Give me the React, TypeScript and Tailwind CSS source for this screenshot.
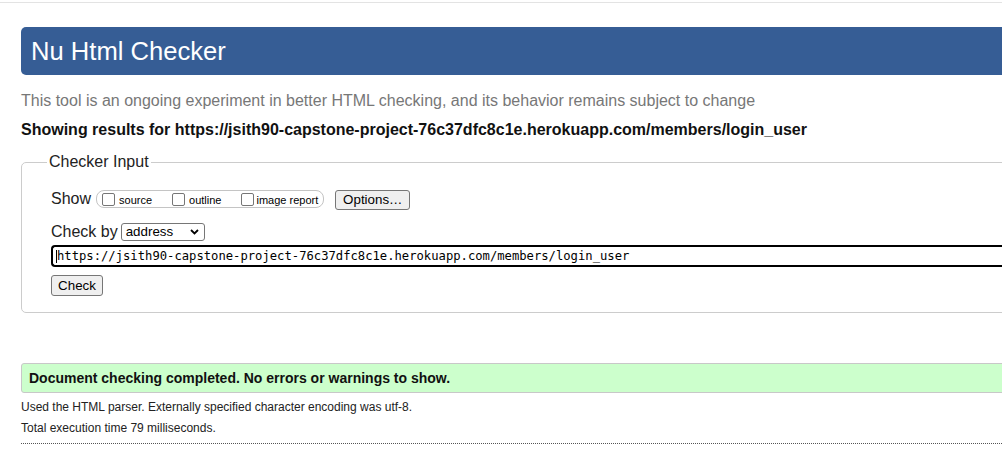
import React from "react";

function Box({ label, gap }: { label: string; gap: string }) {
  return (
    <span className="flex items-center">
      <span className="w-[13px] h-[13px] border border-[#767676] rounded-[2px] bg-white shrink-0" />
      <span className={`${gap} text-[11px] leading-[13px] pt-[3px] text-black`}>{label}</span>
    </span>
  );
}

export default function App() {
  return (
    <div
      className="w-[1002px] h-[472px] overflow-hidden bg-white text-black"
      style={{ fontFamily: '"Liberation Sans", Arial, sans-serif' }}
    >
      <div className="h-[2px]" />
      <div className="h-px bg-[#e3e3e3]" />
      <div className="w-[1300px] pl-[21px]">
        <div className="mt-[24px] h-[48px] bg-[#365d95] rounded-[5px] flex items-center pl-[10px]">
          <span className="text-white text-[25.6px] leading-[30px]">Nu Html Checker</span>
        </div>
        <p className="mt-[17px] text-[16px] leading-[18px] text-[#777]">
          This tool is an ongoing experiment in better HTML checking, and its behavior remains subject to change
        </p>
        <p className="mt-[11px] text-[16px] leading-[18px] font-bold text-[#111]">
          Showing results for https://jsith90-capstone-project-76c37dfc8c1e.herokuapp.com/members/login_user
        </p>

        <fieldset className="mt-[14px] border border-[#cccccc] rounded-[5px] pl-[29px] pt-[19px] pb-[16px]">
          <legend className="-ml-[4px] px-[2px] text-[16px] leading-[18px] text-[#222]">Checker Input</legend>

          <div className="flex items-start">
            <span className="text-[16px] leading-[18px] text-[#222]">Show</span>
            <span className="ml-[5px] h-[18px] flex items-center border border-[#c4c4c4] rounded-[8px] pl-[5px] pr-[5px]">
              <Box label="source" gap="ml-[4px]" />
              <span className="ml-[20px]"><Box label="outline" gap="ml-[4px]" /></span>
              <span className="ml-[20px]"><Box label="image report" gap="ml-[2px]" /></span>
            </span>
            <span className="ml-[11px] w-[75px] h-[20px] flex items-center justify-center border border-[#767676] rounded-[3px] bg-[#efefef] text-[13.33px] leading-[16px]">
              Options…
            </span>
          </div>

          <div className="mt-[13px] flex items-start">
            <span className="text-[16px] leading-[18px] text-[#222]">Check by</span>
            <span className="ml-[3px] w-[84px] h-[18px] flex items-center border border-[#767676] rounded-[3px] bg-white pl-[4px] pr-[4px]">
              <span className="text-[13.33px] leading-[16px] flex-1">address</span>
              <svg width="9" height="6" viewBox="0 0 9 6" className="mr-[1px]">
                <path d="M1 1 L4.5 4.5 L8 1" fill="none" stroke="#000" strokeWidth="1.8" />
              </svg>
            </span>
          </div>

          <div className="mt-[4px] h-[22px] border-2 border-black border-r-0 rounded-l-[4px] flex items-center pl-[4px]">
            <span className="w-px h-[13px] bg-black -ml-[1px]" />
            <span
              className="text-[12.2px] leading-[14px] text-black"
              style={{ fontFamily: '"DejaVu Sans Mono", "Liberation Mono", monospace' }}
            >
              https://jsith90-capstone-project-76c37dfc8c1e.herokuapp.com/members/login_user
            </span>
          </div>

          <div className="mt-[8px] flex">
            <span className="w-[52px] h-[21px] flex items-center justify-center border border-[#767676] rounded-[3px] bg-[#efefef] text-[13.33px] leading-[16px]">
              Check
            </span>
          </div>
        </fieldset>

        <div className="mt-[50px] h-[30px] bg-[#ccffcc] border border-[#c8c8c8] rounded-[3px] flex items-center pl-[7px]">
          <span className="text-[14px] leading-[16px] font-bold text-[#111]">
            Document checking completed. No errors or warnings to show.
          </span>
        </div>
        <p className="mt-[6px] text-[12px] leading-[16px] text-[#222]">
          Used the HTML parser. Externally specified character encoding was utf-8.
        </p>
        <p className="mt-[5px] text-[12px] leading-[16px] text-[#222]">Total execution time 79 milliseconds.</p>
        <div className="mt-[7px] border-t border-dotted border-[#555]" />
      </div>
    </div>
  );
}
